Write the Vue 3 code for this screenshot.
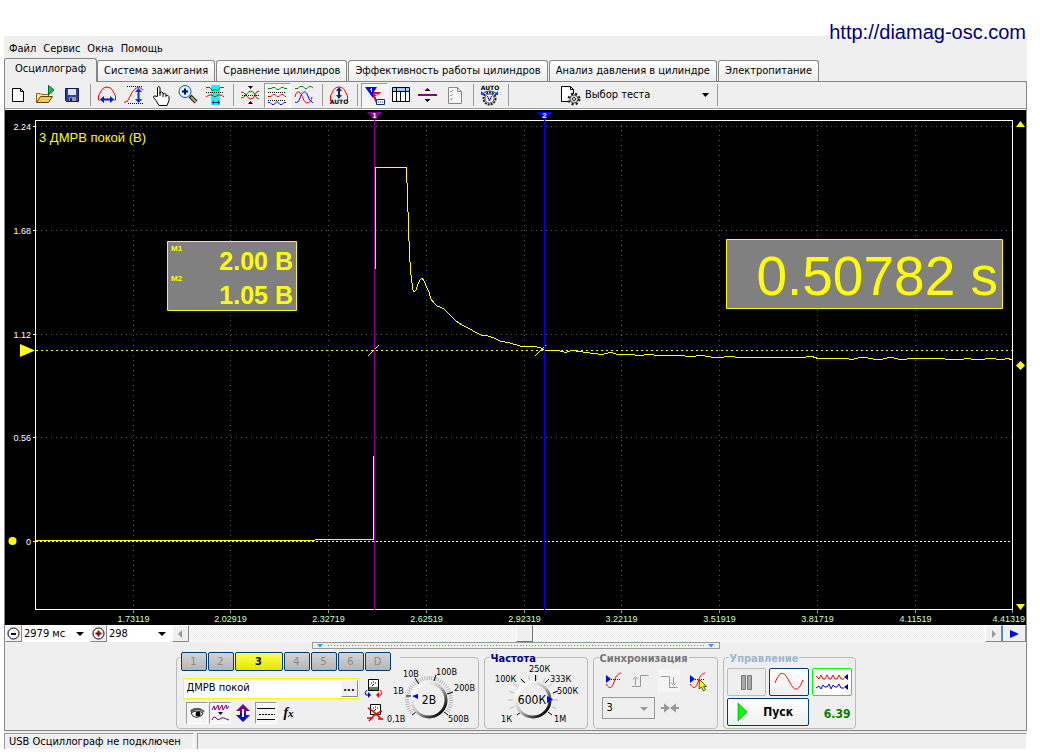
<script setup>
import { ref } from 'vue'

const menu = ['Файл', 'Сервис', 'Окна', 'Помощь']
const tabs = [
  'Осциллограф',
  'Система зажигания',
  'Сравнение цилиндров',
  'Эффективность работы цилиндров',
  'Анализ давления в цилиндре',
  'Электропитание'
]
const channels = ['1', '2', '3', '4', '5', '6', 'D']
const activeTab = ref(0)
const activeChannel = ref('3')
const position = ref(42)
const channelName = ref('ДМРВ покой')

const timeAxis = [
  [133.5, '1.73119'], [230.5, '2.02919'], [328.5, '2.32719'], [426.5, '2.62519'], [524.5, '2.92319'],
  [621.5, '3.22119'], [719.5, '3.51919'], [817.5, '3.81719'], [915.5, '4.11519']
]
const voltAxis = [[126.5, '2.24'], [230.5, '1.68'], [334.5, '1.12'], [437.5, '0.56'], [541.5, '0']]

const trace =
  '375.5,269 375.5,167.5 406.5,167.5 407,183 408,212 409,241 410,262 411,275 412,283 413,290 414,292 416,290 418,284 420,280 422,278 424,281 427,288 429,292 431,299 434,303 437,306 440,307 444,309 450,315 456,321 462,325 470,329 475,332 481,335 488,336 494,338 500,341 510,343 520,346 535,346.5 541,348 544,350 558,350.5 566,352.5 571,350.5 580,351.5 590,353 602,354.5 607,353.5 611,352 618,355 630,354.5 640,355.5 648,354.5 660,355.5 672,356 680,355.5 690,356.5 702,355.5 708,356.5 718,358 722,357.5 727,356 735,357 745,357.5 752,358 762,357 772,357.5 780,357 790,358 800,357.5 812,356.5 818,358.5 835,358.5 845,358.5 852,359.5 860,357.5 865,357 870,358.5 878,360 885,358.5 891,357 896,358.5 902,360 910,358.5 915,358 925,359 940,358.5 950,359.5 960,360 966,358.5 975,359.5 980,360 988,358.5 993,358.5 1002,360 1007,358.5 1012,359.5'

const polar = (cx, cy, r, deg) => {
  const a = (deg * Math.PI) / 180
  return [Math.round((cx + r * Math.cos(a)) * 10) / 10, Math.round((cy + r * Math.sin(a)) * 10) / 10]
}
const ticks = (cx, cy, from, to, step, r1, r2) => {
  let d = ''
  for (let a = from; a <= to; a += step) {
    d += `M${polar(cx, cy, r1, a).join(' ')}L${polar(cx, cy, r2, a).join(' ')}`
  }
  return d
}
const voltTicks = ticks(43, 42, -215, 35, 6, 20, 24)
const freqTicks = ticks(44, 42, -200, 20, 20, 20, 25)
</script>

<template>
  <div class="page">
    <a class="site" href="http://diamag-osc.com">http://diamag-osc.com</a>
    <main class="window">
      <nav class="menu">
        <button v-for="m in menu" :key="m" type="button">{{ m }}</button>
      </nav>
      <div class="tabs" role="tablist">
        <button v-for="(t, i) in tabs" :key="t" type="button" role="tab" :aria-selected="i === activeTab" :class="{ on: i === activeTab }" @click="activeTab = i">{{ t }}</button>
      </div>
      <div class="body">
        <div class="toolbar">
          <button type="button" aria-label="Новый"><svg viewBox="0 0 24 24"><path d="M6.500 5.500h8l3 3v10h-11zM14.500 5.500v3h3" fill="#fff" stroke="#000" /></svg></button>
          <button type="button" aria-label="Открыть"><svg viewBox="0 0 24 24"><path d="M3.500 19.500v-9h4l1 1h7v3" fill="#ffe79a" stroke="#8a6418" /><path d="M3.500 19.500l4-6h12l-4 6z" fill="#f5c757" stroke="#5d430c" /><path d="M15.500 2.500l5.500 4.500-5.500 5z" fill="#0c3" stroke="#063" /></svg></button>
          <button type="button" aria-label="Сохранить"><svg viewBox="0 0 24 24"><path d="M5.500 5.500h13v13h-12l-1-1z" fill="#3040a0" stroke="#101850" /><path d="M8 6h8v6H8z" fill="#dfe4f4" /><path d="M9 14h7v4H9z" fill="#999" /><path d="M10 15h2v3h-2z" fill="#224" /></svg></button>
          <i class="sep"></i>
          <button type="button" aria-label="Ширина"><svg viewBox="0 0 24 24"><path d="M5.500 17H3.500v-4q1-2 2.500-5 2-4 6-4t6 4q1.500 3 2.500 5v4h-2" fill="none" stroke="#f00" /><path d="M7 16.500h10" stroke="#0020c0" stroke-width="2" /><path d="M9 13v7l-4-3.500zM15 13v7l4-3.500z" fill="#0020c0" /></svg></button>
          <button type="button" aria-label="Высота"><svg viewBox="0 0 24 24"><path d="M2 19.500q4 0 6-6t6-8.500q4-2 7 2" fill="none" stroke="#f00" /><path d="M5 3.500h16M6 20.500h15" stroke="#000" stroke-dasharray="1 1" /><path d="M16.500 8v9" stroke="#0030f0" stroke-width="2" /><path d="M13 9h7l-3.500-4zM13 16h7l-3.500 4z" fill="#0030f0" /></svg></button>
          <button type="button" aria-label="Рука"><svg viewBox="0 0 24 24"><path d="M8.500 13.500V4.500q1.500-2 2.500 0v6-1q2-1.500 3 .5v1q2-1.500 3 .5v1q2-1 3 1v4l-2 5h-8l-3-5-2.500-3q0-2 1.500-1.500zM11 10v3M14 11v3M17 12v2" fill="#fff" stroke="#000" /></svg></button>
          <button type="button" aria-label="Увеличить"><svg viewBox="0 0 24 24"><path d="M14 13l6 6" stroke="#222" stroke-width="4" /><path d="M15 14l5 5" stroke="#bba868" stroke-width="2" /><circle cx="9" cy="8.500" r="6" fill="#d9f3ff" stroke="#145b98" stroke-width="1" /><path d="M9 5.500v6M6 8.500h6" stroke="#000080" stroke-width="2" /></svg></button>
          <button type="button" aria-label="Участок"><svg viewBox="0 0 24 24"><path d="M8 2h9v20H8z" fill="#0ff" /><path d="M3 4.500h4l2 3 3-1 3 1 2-3h4" fill="none" stroke="#080" /><path d="M3 9.500h18" stroke="#000" stroke-dasharray="1 1" /><path d="M3 14l3-2h3l3 2 3-2h3l3 2" fill="none" stroke="#f00" /><path d="M9 19.500h8M10.500 17.500v4M15.500 17.500v4" stroke="#0020a0" /></svg></button>
          <i class="sep"></i>
          <button type="button" aria-label="Ноль"><svg viewBox="0 0 24 24"><path d="M3 9q3 0 5 3t4 4q4 0 5-4t4-4" fill="none" stroke="#f00" /><path d="M3 15q3 0 5-3t4-4q4 0 5 4t4 4" fill="none" stroke="#080" /><path d="M4 12.500h17" stroke="#000" stroke-dasharray="1 1" /><path d="M10 3h5l-2.500 3zM10 21h5l-2.500-3z" /></svg></button>
          <button type="button" class="pressed" aria-label="Раздельно"><svg viewBox="0 0 24 24"><path d="M3 5.500h3l2-1h2l2 2h2l2-2h2l2 1h2" fill="none" stroke="#080" /><path d="M3 9.500h18M3 17.500h18" stroke="#000" stroke-dasharray="1 1" /><path d="M3 13.500h3l2-2h2l2 2h2l2-2h2l2 2h1" fill="none" stroke="#f00" /><path d="M3 19.500h2l2 2h2l3-3 3 3h2l2-2h2" fill="none" stroke="#00f" /></svg></button>
          <button type="button" aria-label="Вместе"><svg viewBox="0 0 24 24"><path d="M3 5.500h3l2-2h3l2 2h2l2-2h2l2 1.500" fill="none" stroke="#080" /><path d="M3 14q1-6 4-5c4 2 4 11 8 11q4 0 5-6" fill="none" stroke="#f00" /><path d="M3 19q3 2 5-4c2-6 5-8 7-4q2 7 6 9" fill="none" stroke="#00f" /></svg></button>
          <i class="sep"></i>
          <button type="button" aria-label="Автомасштаб"><svg viewBox="0 0 24 24"><path d="M3.500 18v-5q1-2 2-4 2-5 6.500-5t6.500 5q1 2 2 4v5" fill="none" stroke="#f00" /><path d="M12 7v7" stroke="#0a2a80" stroke-width="2" /><path d="M9 8h6l-3-4zM9 12h6l-3 4z" fill="#0a2a80" /><text x="12" y="21" text-anchor="middle" class="tiny">AUTO</text></svg></button>
          <i class="sep"></i>
          <button type="button" class="pressed" aria-label="Маркеры"><svg viewBox="0 0 24 24"><path d="M8 9h11l-5 5v6l-3-6z" fill="#f00" /><path d="M3 4h12l-4 6v5l-3-4z" fill="#00f" /><path d="M9.500 5v4M8 6.500h1M13 11.500h2v2h-2" stroke="#fff" fill="none" /><path d="M14.500 16.500h8v5h-8z" fill="#fff" stroke="#003090" /><path d="M16 19h5" stroke="#003090" stroke-dasharray="1 1" /></svg></button>
          <button type="button" aria-label="Таблица"><svg viewBox="0 0 24 24"><path d="M3.500 4.500h17v14h-17z" fill="#fff" stroke="#000" /><path d="M4 5h16v3H4z" fill="#9cf" /><path d="M3.500 8.500h17M7.500 4.500v14M11.500 8v10.500M16.500 4.500v14" stroke="#000" fill="none" /></svg></button>
          <button type="button" aria-label="Линия"><svg viewBox="0 0 24 24"><path d="M2 12h19" stroke="#800080" stroke-width="2" /><path d="M8.500 8h6l-3-3zM8.500 16h6l-3 3z" /></svg></button>
          <button type="button" aria-label="Отчёт"><svg viewBox="0 0 24 24"><path d="M5.500 4.500h9l4 4v12h-13zM14.500 4.500v4h4" fill="#f8f8f8" stroke="#888" /><path d="M7 8l1 1 2-2M7 12l1 1 2-2M7 16l1 1 2-2" fill="none" stroke="#999" /></svg></button>
          <i class="sep"></i>
          <button type="button" aria-label="Автоизмерение"><svg viewBox="0 0 24 24"><text x="12" y="7" text-anchor="middle" class="tiny">AUTO</text><path d="M4 11q3-3 7.500-3t7.500 3" fill="none" stroke="#0040ff" /><path d="M3 8v4h4zM20 8v4h-4z" fill="#0040ff" /><circle cx="11.500" cy="15.500" r="6" fill="#eee" stroke="#222" stroke-width="2" stroke-dasharray="2 1" /><circle cx="11.500" cy="15.500" r="4.500" fill="#fff" stroke="#555" /><path d="M9.500 13l2 5 2-5" fill="none" stroke="#00c" /></svg></button>
          <i class="sep"></i>
          <button type="button" class="test">
            <svg viewBox="0 0 24 24"><path d="M3.500 3.500h9l3 3v12h-12zM12.500 3.500v3h3" fill="#fff" stroke="#000" /><circle cx="16" cy="16" r="5" fill="#dde8dd" stroke="#222" stroke-width="3" stroke-dasharray="2 2" /><circle cx="16" cy="16" r="4" fill="#cddccd" stroke="#555" /><circle cx="16" cy="16" r="1.500" fill="#fff" stroke="#222" /></svg>
            <span>Выбор теста</span><i class="caret"></i>
          </button>
          <i class="sep"></i>
        </div>

        <svg class="scope" viewBox="5 110 1021 515" role="img" aria-label="Осциллограмма">
          <path d="M5 110h1021v515H5z" fill="#000" />
          <g shape-rendering="crispEdges">
            <g stroke="#5a5a5a" stroke-dasharray="1 4">
              <path v-for="t in timeAxis" :key="t[1]" :d="`M${t[0]} 125V606`" />
              <path v-for="v in voltAxis.slice(0, 4)" :key="v[1]" :d="`M36 ${v[0]}H1012`" />
            </g>
            <path d="M35.500 609.500v-489h977v489z" fill="none" stroke="#fff" />
            <path v-for="t in timeAxis" :key="t[1]" :d="`M${t[0]} 610v3`" stroke="#999" />
            <path d="M1012.500 610v3" stroke="#999" />
            <path v-for="v in voltAxis" :key="v[1]" :d="`M33 ${v[0]}h3`" stroke="#fff" />
            <path d="M36 541.500H1012" stroke="#fff" stroke-dasharray="2 2" />
            <path d="M36 350.500H1012" stroke="#ff0" stroke-dasharray="2 3" />
            <path d="M36 540.500H315M315 539.500H373.500V456" fill="none" stroke="#ff0" />
            <polyline :points="trace" fill="none" stroke="#ff0" />
            <path d="M368 356l11-11M535 356l11-11" stroke="#ff0" />
            <path d="M374.500 112V610" stroke="#900090" />
            <path d="M544.500 112V610" stroke="#00f" />
          </g>
          <path d="M367 112h15l-7.500 8z" fill="#900090" />
          <path d="M537 112h15l-7.500 8z" fill="#00f" />
          <g class="flag"><text x="374.500" y="118">1</text><text x="544.500" y="118">2</text></g>
          <g class="volts"><text v-for="v in voltAxis" :key="v[1]" x="31" :y="v[0] + 3">{{ v[1] }}</text></g>
          <g class="times"><text v-for="t in timeAxis" :key="t[1]" :x="t[0]" y="622">{{ t[1] }}</text><text x="1025" y="622" class="edge">4.41319</text></g>
          <text x="39" y="142" class="name">3 ДМРВ покой (В)</text>
          <g fill="#ff0">
            <path d="M20 344l15 6.500-15 6.500z" />
            <circle cx="12.500" cy="541" r="4" />
            <path d="M1016 127h9l-4.500-6zM1016 604h9l-4.500 6zM1020.500 361l4.500 4.500-4.500 4.500-4.500-4.500z" />
          </g>
          <path d="M167.500 241.500h129v69h-129zM726.500 239.500h276v69h-276z" fill="#808080" stroke="#ff0" />
          <g class="marks"><text x="171" y="251">M1</text><text x="171" y="281">M2</text></g>
          <g class="levels"><text x="293" y="270">2.00 В</text><text x="293" y="304">1.05 В</text></g>
          <text x="998" y="295" class="delta">0.50782 s</text>
        </svg>

        <div class="scroll">
          <button type="button" class="bevel" aria-label="Уменьшить"><svg viewBox="0 0 16 16"><circle cx="7.500" cy="7.500" r="5.500" fill="#fff" stroke="#000" /><path d="M5 8h5" stroke="#000080" stroke-width="2" /></svg></button>
          <span class="pick range"><select aria-label="Длительность"><option>2979 мс</option></select></span>
          <button type="button" class="bevel" aria-label="Увеличить"><svg viewBox="0 0 16 16"><circle cx="7.500" cy="7.500" r="5.500" fill="#fff" stroke="#000" /><path d="M4.500 7.500h6M7.500 4.500v6" stroke="#800000" stroke-width="2" /></svg></button>
          <span class="pick step"><select aria-label="Деление"><option>298</option></select></span>
          <button type="button" class="bevel" aria-label="Влево"><svg viewBox="0 0 16 16"><path d="M9 4v8L5 8z" fill="#999" /></svg></button>
          <input v-model="position" type="range" min="0" max="100" aria-label="Позиция" />
          <button type="button" class="bevel" aria-label="Вправо"><svg viewBox="0 0 16 16"><path d="M6 4v8l4-4z" fill="#999" /></svg></button>
          <button type="button" class="bevel wide" aria-label="Воспроизвести"><svg viewBox="0 0 16 16"><path d="M4 4v8l9-4z" fill="#00f" /></svg></button>
        </div>

        <div class="splitter"><i class="caret"></i><span></span><i class="caret"></i></div>

        <div class="panels">
          <section class="group channel">
            <div class="left">
              <div class="channels">
                <button v-for="c in channels" :key="c" type="button" :class="{ on: c === activeChannel }" @click="activeChannel = c">{{ c }}</button>
              </div>
              <div class="row">
                <div class="field"><input v-model="channelName" type="text" aria-label="Имя канала" /><button type="button" class="bevel">...</button></div>
                <button type="button" class="flat" aria-label="Прибор"><svg viewBox="0 0 22 22"><path d="M6.500 2.500h10v11h-10z" fill="#fff" stroke="#000" /><path d="M7 10h9v3H7z" fill="#484" /><path d="M9 6h1M11 5h1M13 6h1M10 9l2-2" stroke="#000" /><path d="M5 13q-3 2-1 5h3" fill="none" stroke="#00a" /><path d="M6 15l3 3-3 3z" fill="#00a" /><path d="M18 13q3 2 1 5h-3" fill="none" stroke="#f00" /><path d="M17 15l-3 3 3 3z" fill="#f00" /></svg></button>
              </div>
              <div class="row tools">
                <button type="button" class="flat pressed" aria-label="Видимость"><svg viewBox="0 0 22 22"><path d="M5 10q6-5 13 0v-1q-6-5-13-1z" fill="#555" stroke="#555" /><path d="M5 11q6-4 12 0l-1 2q-5 4-9 1z" fill="#fff" stroke="#222" /><circle cx="12" cy="12" r="2.500" /></svg></button>
                <button type="button" class="flat pressed" aria-label="Фильтр"><svg viewBox="0 0 22 22"><path d="M3 8l2-4 1 4 3-5 1 5 3-5 1 5 3-5 1 4 2-3" fill="none" stroke="#800080" /><path d="M9 10h5l-2.500 3z" /><path d="M3 18q2-5 4-2t4 1 4-1 5 2" fill="none" stroke="#800080" /></svg></button>
                <button type="button" class="flat" aria-label="Сдвиг"><svg viewBox="0 0 22 22"><path d="M11 2l7 7h-4v2H8V9H4z" fill="#800080" /><path d="M11 20l7-7h-4v-2H8v2H4z" fill="#00f" /><path d="M11 7v8" stroke="#fff" stroke-width="2" /></svg></button>
                <button type="button" class="flat pressed" aria-label="Линии"><svg viewBox="0 0 22 22"><path d="M2 6.500h18M2 17.500h18" stroke="#000" /><path d="M4 12.500h16" stroke="#000" stroke-dasharray="2 1" /></svg></button>
                <button type="button" class="flat fx">f<small>x</small></button>
                <button type="button" class="flat last" aria-label="Отключить прибор"><svg viewBox="0 0 22 22"><path d="M6.500 2.500h10v10h-10z" fill="#fff" stroke="#000" /><path d="M9 6h1M11 5h1M13 6h1M10 9l2-2" stroke="#000" /><path d="M4 6q6 3 14 12M18 9Q10 12 5 19M3 16h6M14 17h5" fill="none" stroke="#f00" stroke-width="1.500" /></svg></button>
              </div>
            </div>
            <svg class="dial" viewBox="0 0 90 70" role="img" aria-label="Диапазон 2В">
              <defs><linearGradient id="knobA" x1="0" y1="0" x2="1" y2="1"><stop offset=".15" stop-color="#fff" /><stop offset=".5" stop-color="#bbb" /><stop offset=".85" stop-color="#111" /></linearGradient></defs>
              <path :d="voltTicks" stroke="#b4b4b4" />
              <path d="M20 38h5M29 20l4 6M50 17l-2 6M67 34l-6 2M26 57l4-3M62 57l-4-3" stroke="#000" />
              <circle cx="43" cy="42" r="17" fill="#efefef" stroke="url(#knobA)" stroke-width="3" />
              <path d="M26 38l6-2v5z" fill="#00f" />
              <g class="scale"><text x="17" y="19">10В</text><text x="50" y="17">100В</text><text x="7" y="36">1В</text><text x="68" y="33">200В</text><text x="1" y="64">0,1В</text><text x="62" y="64">500В</text></g>
              <text x="43" y="46" class="knob">2В</text>
            </svg>
          </section>

          <section class="group freq">
            <h2>Частота</h2>
            <svg class="dial" viewBox="0 0 90 70" role="img" aria-label="Частота 600К">
              <defs><linearGradient id="knobB" x1="0" y1="0" x2="1" y2="1"><stop offset=".15" stop-color="#fff" /><stop offset=".5" stop-color="#bbb" /><stop offset=".85" stop-color="#111" /></linearGradient></defs>
              <path :d="freqTicks" stroke="#bbb" />
              <path d="M32 21l4 4M46.500 17v6M60 21l-4 4M69 33l-5 2M28 57l4-3M63 57l-4-3" stroke="#000" />
              <circle cx="44" cy="42" r="17" fill="#efefef" stroke="url(#knobB)" stroke-width="3" />
              <path d="M58 38v7l6-3.500z" fill="#00f" />
              <g class="scale"><text x="6" y="24">100К</text><text x="40" y="14">250К</text><text x="61" y="24">333К</text><text x="68" y="36">500К</text><text x="12" y="64">1К</text><text x="65" y="64">1М</text></g>
              <text x="43" y="46" class="knob">600К</text>
            </svg>
          </section>

          <section class="group sync">
            <h2>Синхронизация</h2>
            <div class="row icons">
              <button type="button" class="flat" aria-label="Уровень"><svg viewBox="0 0 22 22"><path d="M4 14c4 6 6 4 8-2s3-8 7-9" fill="none" stroke="#f00" /><path d="M4 5v8l5-4z" fill="#00f" /><path d="M9 9.500h10" stroke="#00f" stroke-dasharray="1 1" /></svg></button>
              <button type="button" class="flat" aria-label="Фронт"><svg viewBox="0 0 22 22"><path d="M2 16.500h8.500v-11h8M5.500 15V8M3 9.500l2.500-3 2.500 3" fill="none" stroke="#999" /></svg></button>
              <button type="button" class="flat dither" aria-label="Спад"><svg viewBox="0 0 22 22"><path d="M3 6.500h8.500v11h8M15.500 7v7M13 12.500l2.500 3 2.500-3" fill="none" stroke="#999" /></svg></button>
              <button type="button" class="flat" aria-label="Выбор уровня"><svg viewBox="0 0 22 22"><path d="M4 14c4 6 6 4 8-2s3-8 7-9" fill="none" stroke="#f00" /><path d="M4 5v8l5-4z" fill="#00f" /><path d="M9 9.500h9" stroke="#00f" stroke-dasharray="1 1" /><path d="M13.500 9.500l7 7h-3l2 3-2 1.500-2-4-2.500 2z" fill="#ff0" stroke="#550" /></svg></button>
            </div>
            <div class="row">
              <span class="pick source"><select aria-label="Канал синхронизации"><option>3</option></select></span>
              <svg class="join" viewBox="0 0 22 22"><path d="M2 11h4M16 11h4" stroke="#999" stroke-width="2" /><path d="M5 6.500v9l6-4.500zM17 6.500v9l-6-4.500z" fill="#999" /></svg>
            </div>
          </section>

          <section class="group control">
            <h2>Управление</h2>
            <div class="pads">
              <button type="button" class="pad off" aria-label="Пауза"><svg viewBox="0 0 36 24"><path d="M13.500 5.500h4v14h-4zM19.500 5.500h4v14h-4z" fill="#aaa" stroke="#777" /></svg></button>
              <button type="button" class="pad" aria-label="Непрерывно"><svg viewBox="0 0 36 24"><path d="M4 13c5-13 9-12 14-2s9 12 14-1" fill="none" stroke="#f00" /></svg></button>
              <button type="button" class="pad lit" aria-label="Два канала"><svg viewBox="0 0 36 24"><path d="M2 6l3 3 2-4 2 4h2l2-4 2 4h2l2-4 2 4h2l2-4 2 4h3" fill="none" stroke="#f00" /><path d="M2 18l3-2 2 3 2-4 2 2h2l2-3 2 5 2-4 2 2h2l2-3 2 4h3" fill="none" stroke="#00f" /><path d="M34 4v6l-4-3zM34 14v6l-4-3z" fill="#00a" /></svg></button>
              <button type="button" class="pad start"><svg viewBox="0 0 12 20"><path d="M1 1v18l9-9z" fill="#0f0" stroke="#060" stroke-width=".5" /></svg><span>Пуск</span></button>
              <output>6.39</output>
            </div>
          </section>
        </div>
      </div>
      <footer class="status"><span>USB Осциллограф не подключен</span><span></span></footer>
    </main>
  </div>
</template>

<style>
body {
  background: #fff;
}
</style>

<style scoped>
.page {
  position: relative;
  padding: 36px 13px 5px 4px;
  color: #000;
  font: 11px/14px "DejaVu Sans Condensed", "Noto Sans", sans-serif;
}
.page *, .page *::before, .page *::after {
  box-sizing: border-box;
}
button, select, input {
  margin: 0;
  padding: 0;
  border: 0;
  border-radius: 0;
  background: none;
  color: inherit;
  font: inherit;
}
svg {
  display: block;
}
.site {
  position: absolute;
  top: 20px;
  right: 14px;
  color: #000080;
  font: 20px/24px "Liberation Sans", sans-serif;
  text-decoration: none;
}
.window {
  background: #efefef;
}
.menu {
  display: flex;
  gap: 7px;
  padding: 6px 5px 2px;
}
.tabs {
  display: flex;
  align-items: flex-end;
  gap: 1px;
}
.tabs button {
  height: 21px;
  padding: 0 6px;
  border: 1px solid #858585;
  border-bottom: 0;
  border-radius: 3px 3px 0 0;
  background: linear-gradient(#fff, #ececec);
  white-space: nowrap;
}
.tabs .on {
  position: relative;
  z-index: 1;
  height: 24px;
  margin: 0 -1px -1px 0;
  padding: 0 10px 3px;
  background: #efefef;
}
.body {
  border: 1px solid #858585;
}
.toolbar {
  display: flex;
  align-items: center;
  height: 27px;
  border-bottom: 1px solid #999;
}
.toolbar button {
  display: flex;
  align-items: center;
  justify-content: flex-start;
  flex: none;
  width: 27px;
  height: 25px;
}
.toolbar svg {
  width: 24px;
  height: 24px;
  margin-left: 1px;
  flex: none;
}
.toolbar .pressed svg {
  margin-left: 0;
}
.toolbar .sep {
  width: 8px;
  height: 22px;
  flex: none;
  background: linear-gradient(#999, #999) 4px 0 / 1px 100% no-repeat;
}
.toolbar .test {
  width: 201px;
  padding: 0 4px 0 45px;
  gap: 3px;
}
.test span {
  flex: 1;
  text-align: left;
}
.caret {
  width: 7px;
  height: 4px;
  background: currentColor;
  clip-path: polygon(0 0, 100% 0, 50% 100%);
}
.pressed {
  border: 1px solid #fff;
  border-top-color: #999;
  border-left-color: #999;
}
.pressed, .dither, .scroll input {
  background: repeating-conic-gradient(#fff 0 25%, #ededed 0 50%) 0 0 / 2px 2px;
}
.tiny {
  font: bold 6px "DejaVu Sans", sans-serif;
}
.scope {
  width: 100%;
  height: auto;
  border-top: 1px solid #fff;
  font-family: "Liberation Sans", sans-serif;
}
.flag text {
  fill: #fff;
  font-size: 8px;
  font-weight: bold;
  text-anchor: middle;
}
.volts text {
  fill: #fff;
  font-size: 9px;
  text-anchor: end;
}
.times text {
  fill: #cfc;
  font-size: 9px;
  text-anchor: middle;
}
.times .edge {
  text-anchor: end;
}
.name {
  fill: #ff0;
  font-size: 13px;
}
.marks text {
  fill: #ff0;
  font-size: 8px;
  font-weight: bold;
}
.levels text {
  fill: #ff0;
  font-size: 25px;
  font-weight: bold;
  text-anchor: end;
}
.delta {
  fill: #ff0;
  font-size: 55px;
  text-anchor: end;
}
.scroll {
  display: flex;
  height: 17px;
}
.bevel {
  display: flex;
  align-items: center;
  justify-content: center;
  flex: none;
  width: 17px;
  height: 17px;
  border: 1px solid #fff;
  border-right-color: #888;
  border-bottom-color: #888;
  background: #efefef;
}
.bevel svg {
  width: 16px;
  height: 16px;
  flex: none;
}
.bevel.wide {
  width: 24px;
  border-left-color: #58a;
}
.pick {
  position: relative;
  display: block;
  background: #fff;
}
.pick select {
  display: block;
  width: 100%;
  height: 100%;
  padding: 0 16px 0 2px;
  appearance: none;
}
.pick::after {
  content: "";
  position: absolute;
  top: 7px;
  right: 6px;
  border: 4px solid transparent;
  border-top-color: #000;
  border-bottom: 0;
}
.range {
  width: 68px;
}
.step {
  width: 65px;
}
.scroll input {
  flex: 1;
  min-width: 0;
  height: 17px;
  appearance: none;
}
.scroll input::-webkit-slider-thumb {
  width: 17px;
  height: 17px;
  appearance: none;
  border: 1px solid #fff;
  border-right-color: #777;
  border-bottom-color: #777;
  background: #efefef;
}
.splitter {
  display: flex;
  align-items: center;
  justify-content: space-between;
  width: 408px;
  max-width: 100%;
  height: 7px;
  margin: 0 auto;
  padding: 0 4px;
  border: 1px solid #999;
  color: #39f;
}
.splitter span {
  flex: 1;
  height: 1px;
  margin: 0 4px;
  background: repeating-linear-gradient(90deg, #39f 0 1px, transparent 0 3px);
}
.panels {
  display: flex;
  justify-content: center;
  gap: 5px;
  padding: 8px 0 1px;
}
.group {
  flex: none;
  height: 72px;
  border: 1px solid #bbb;
  border-radius: 4px;
}
.group h2 {
  width: max-content;
  margin: -6px 0 0 5px;
  padding: 0 1px;
  background: #efefef;
  font: bold 11px/14px "DejaVu Sans Condensed", sans-serif;
}
.channel {
  display: flex;
  width: 303px;
}
.left {
  width: 209px;
  flex: none;
}
.channels {
  display: flex;
  gap: 1px;
  width: 220px;
  margin: -6px 0 0 3px;
  padding-left: 1px;
  background: #efefef;
}
.channels button {
  width: 26px;
  height: 19px;
  border: 1px solid #003c74;
  border-radius: 2px;
  background: linear-gradient(#d4d4d4, #b5b5b5);
  color: #888;
}
.channels .on {
  width: 48px;
  background: linear-gradient(#ff5, #e4e400);
  color: #000;
  font-weight: bold;
}
.row {
  display: flex;
  align-items: center;
}
.field {
  display: flex;
  align-items: center;
  width: 177px;
  height: 21px;
  margin: 0 2px 0 6px;
  padding: 0 1px;
  border: 1px solid #ff0;
  background: #fff;
}
.field input {
  flex: 1;
  min-width: 0;
  padding: 0 2px;
}
.field .bevel {
  font-weight: bold;
  line-height: 8px;
}
.left .row {
  margin-top: 6px;
}
.left .tools {
  margin-top: 3px;
  padding-left: 9px;
  gap: 1px;
}
.flat {
  display: flex;
  align-items: center;
  justify-content: center;
  width: 22px;
  height: 22px;
  flex: none;
}
.flat svg, .join {
  width: 22px;
  height: 22px;
  flex: none;
}
.fx {
  font: italic bold 14px/14px "Liberation Serif", serif;
}
.fx small {
  font-size: 11px;
}
.tools .last {
  margin-left: auto;
}
.dial {
  width: 90px;
  height: 70px;
  flex: none;
}
.scale text {
  font-size: 9px;
}
.knob {
  font-size: 12px;
  text-anchor: middle;
}
.freq {
  width: 104px;
}
.freq h2 {
  color: #000080;
}
.freq .dial {
  margin: -8px 0 0 4px;
}
.sync {
  width: 125px;
}
.sync h2 {
  color: #777;
}
.icons {
  justify-content: space-between;
  padding: 4px 8px 0;
}
.sync .row + .row {
  gap: 4px;
  margin-top: 5px;
  padding-left: 8px;
}
.source {
  width: 53px;
  height: 22px;
  border: 1px solid #999;
  background: #efefef;
}
.source select {
  padding-left: 4px;
}
.source::after {
  top: 9px;
  border-top-color: #999;
}
.control {
  width: 133px;
}
.control h2 {
  color: #9db6d3;
}
.pads {
  display: grid;
  grid-template-columns: repeat(3, 1fr);
  gap: 2px 3px;
  padding: 2px 3px 0;
}
.pad {
  display: flex;
  align-items: center;
  justify-content: center;
  height: 28px;
  border: 1px solid #003c74;
  border-radius: 2px;
  background: linear-gradient(#fff, #efefef);
}
.pad svg {
  width: 36px;
  height: 24px;
}
.off {
  border-color: #bbb;
  background: #efefef;
}
.lit {
  border-color: #0f0;
  background: #fff;
}
.start {
  grid-column: span 2;
  justify-content: flex-start;
  padding-left: 9px;
  font-size: 12px;
  font-weight: bold;
}
.start svg {
  width: 12px;
  height: 20px;
}
.start span {
  flex: 1;
  text-align: center;
}
output {
  align-self: center;
  padding: 4px 1px 0 0;
  color: #008000;
  font-size: 12px;
  font-weight: bold;
  text-align: right;
}
.status {
  display: flex;
  gap: 3px;
  height: 18px;
  padding-top: 2px;
}
.status span {
  padding: 1px 4px 0;
  border: 1px solid #999;
  border-right-color: #fff;
  border-bottom: 0;
}
.status span:first-child {
  width: 190px;
  white-space: nowrap;
}
.status span:last-child {
  flex: 1;
}
</style>
